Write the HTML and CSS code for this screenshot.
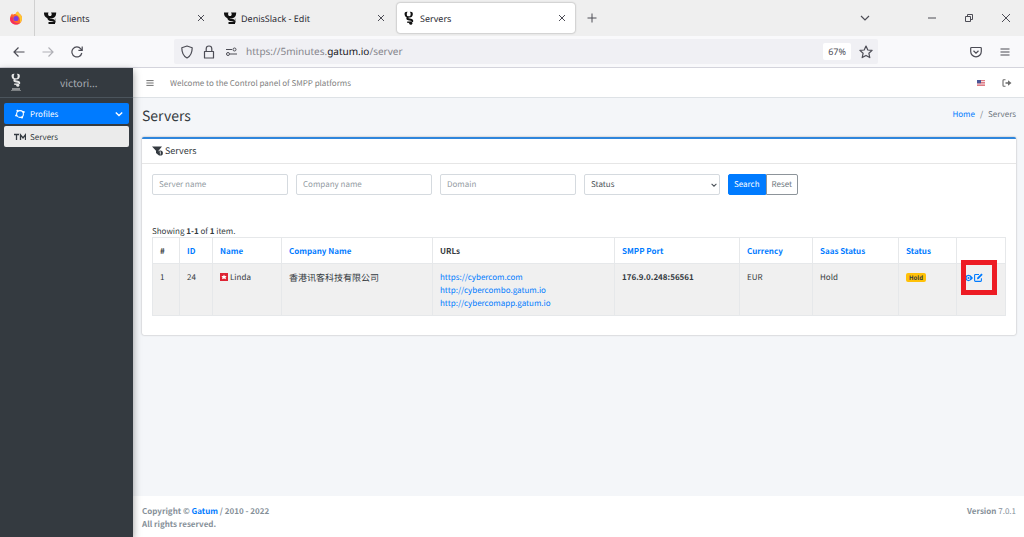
FILE: index.html
```html
<!DOCTYPE html>
<html lang="en">
<head>
<meta charset="utf-8">
<title>Servers</title>
<link rel="stylesheet" href="styles.css">
</head>
<body>
<svg class="defs" width="0" height="0" aria-hidden="true">
  <symbol id="logo" viewBox="0 0 14 14">
    <path d="M5.600.8C2.800.6 2.400 2 2.600 3.600c.2 1.900 1.400 2.900 3 2.900h2.200c1.600 0 2.800-1 3-2.900C11 2 10.600.6 7.800.8 8.900 2 9 4 8 5.200H5.400C4.500 4 4.600 2 5.600.8z" fill="currentColor"/>
    <path d="M6.200 6C5 6.900 5 7.900 6.400 8.200l2.400.5c1.600.3 1.800 1.300 1 2.100" fill="none" stroke="currentColor" stroke-width="2"/>
    <path d="M5.200 11.200h4.600" stroke="currentColor" stroke-width="1.400"/>
    <circle cx="8.800" cy="12.300" r="1.500" fill="currentColor"/>
  </symbol>
  <symbol id="logo-wide" viewBox="0 0 14 14">
    <path d="M1 1.500h4.500C4.800 2.800 5 4.600 6.200 5h1.600C9 4.300 9 3 8 1.500h5.200c0 3-1.200 5.700-4.700 6h-2C3 7.500.8 5 1 1.500z" fill="currentColor"/>
    <path d="M5.500 7c0 1.800 1.500 2 3.500 2.200 2 .2 3 .8 2.800 2" fill="none" stroke="currentColor" stroke-width="2.200"/>
    <path d="M5.500 12h6.500" stroke="currentColor" stroke-width="2"/>
    <path d="M11.800 7.500h1.200v3h-1.200z" fill="#aaa"/>
  </symbol>
  <symbol id="close" viewBox="0 0 10 10"><path d="M2 2l6 6M8 2L2 8" fill="none" stroke="currentColor" stroke-width="1"/></symbol>
  <symbol id="down" viewBox="0 0 10 10"><path d="M1 3l4 4 4-4" fill="none" stroke="currentColor" stroke-width="1.200"/></symbol>
  <symbol id="bars" viewBox="0 0 10 10"><path d="M.5 2h9M.5 5h9M.5 8h9" fill="none" stroke="currentColor" stroke-width="1.200"/></symbol>
</svg>

<header class="browser">
  <div class="tabs">
    <div class="firefox">
      <svg width="14" height="14" viewBox="0 0 14 14">
        <path d="M7 13.500a6 6 0 0 1-6-6C1 5.500 2 3.500 3.200 2.500l.6 1.200C5 3 6 3 6.500 3.200 7 2 8 .8 9 .5c.3 1.500 1.500 2 2.600 3.200 1.200 1.300 1.700 3 1.300 4.800a6 6 0 0 1-5.900 5z" fill="#ff6a2b"/>
        <path d="M9 .5c.3 1.500 1.500 2 2.600 3.200 1.200 1.300 1.700 3 1.300 4.800-.3 1.400-1 2.600-2 3.500C11.500 9 11 5 6.500 3.200 7 2 8 .8 9 .5z" fill="#ffc730"/>
        <path d="M1 7.500c0 4 3 6 6 6 1.500 0 3-.6 4-1.600-3 .8-7-.4-7-4.200L3.200 5z" fill="#f5305c"/>
        <circle cx="7" cy="7.500" r="2.600" fill="#7a3fe0"/>
      </svg>
    </div>
    <div class="tab">
      <svg class="favicon" width="14" height="14"><use href="#logo-wide"/></svg>
      <span class="tab-title">Clients</span>
      <button class="icon-button" aria-label="Close Clients"><svg width="10" height="10"><use href="#close"/></svg></button>
    </div>
    <div class="tab">
      <svg class="favicon" width="14" height="14"><use href="#logo-wide"/></svg>
      <span class="tab-title">DenisSlack - Edit</span>
      <button class="icon-button" aria-label="Close DenisSlack - Edit"><svg width="10" height="10"><use href="#close"/></svg></button>
    </div>
    <div class="tab tab-active">
      <svg class="favicon" width="14" height="14"><use href="#logo"/></svg>
      <span class="tab-title">Servers</span>
      <button class="icon-button" aria-label="Close Servers"><svg width="10" height="10"><use href="#close"/></svg></button>
    </div>
    <button class="icon-button new-tab" aria-label="New tab"><svg width="10" height="10" viewBox="0 0 10 10"><path d="M5 .5v9M.5 5h9" stroke="currentColor" fill="none"/></svg></button>
    <div class="window-controls">
      <button class="icon-button list-tabs" aria-label="List tabs"><svg width="10" height="10"><use href="#down"/></svg></button>
      <button class="icon-button" aria-label="Minimize"><svg width="10" height="10" viewBox="0 0 10 10"><path d="M1 5h8" stroke="currentColor"/></svg></button>
      <button class="icon-button" aria-label="Restore"><svg width="10" height="10" viewBox="0 0 10 10"><path d="M1.500 3.500h5v5h-5zM3.500 3.500v-2h5v5h-2" fill="none" stroke="currentColor"/></svg></button>
      <button class="icon-button" aria-label="Close window"><svg width="10" height="10" viewBox="0 0 10 10"><path d="M1 1l8 8M9 1L1 9" stroke="currentColor"/></svg></button>
    </div>
  </div>

  <div class="toolbar">
    <nav class="history">
      <button class="icon-button" aria-label="Back"><svg width="12" height="12" viewBox="0 0 12 12"><path d="M11.500 6H1M5.500 1.500L1 6l4.500 4.500" fill="none" stroke="currentColor" stroke-width="1.200"/></svg></button>
      <button class="icon-button muted" aria-label="Forward"><svg width="12" height="12" viewBox="0 0 12 12"><path d="M.5 6H11M6.500 1.500L11 6l-4.500 4.500" fill="none" stroke="currentColor" stroke-width="1.200"/></svg></button>
      <button class="icon-button" aria-label="Reload"><svg width="12" height="12" viewBox="0 0 12 12"><path d="M10.800 7A5 5 0 1 1 9.800 2.800L11 4.200M11.200.6v3.800H7.400" fill="none" stroke="currentColor" stroke-width="1.200"/></svg></button>
    </nav>
    <div class="address">
      <svg width="14" height="14" viewBox="0 0 14 14"><path d="M7 1L12.200 2.800C12.200 7.500 11 11 7 13 3 11 1.800 7.500 1.800 2.800z" fill="none" stroke="currentColor" stroke-width="1.200" stroke-linejoin="round"/></svg>
      <svg width="14" height="14" viewBox="0 0 14 14"><path d="M2.500 6.500h9v6.500h-9zM4.200 6.500V3.800a2.800 2.800 0 0 1 5.600 0v2.700" fill="none" stroke="currentColor" stroke-width="1.200" stroke-linejoin="round"/></svg>
      <svg width="14" height="14" viewBox="0 0 14 14"><path d="M2 4.500h6M6 9h7" fill="none" stroke="currentColor" stroke-width="1.200"/><circle cx="10.500" cy="4.500" r="1.500" fill="none" stroke="currentColor"/><circle cx="4" cy="9" r="1.500" fill="none" stroke="currentColor"/></svg>
      <span class="url">https://5minutes.<b>gatum.io</b>/server</span>
      <button class="zoom-level">67%</button>
      <button class="icon-button" aria-label="Bookmark"><svg width="14" height="14" viewBox="0 0 14 14"><path d="M7 1l1.800 4 4.300.4-3.200 2.900.9 4.300L7 10.400l-3.800 2.200.9-4.300L.9 5.400 5.200 5z" fill="none" stroke="currentColor" stroke-width="1.200" stroke-linejoin="round"/></svg></button>
    </div>
    <div class="tools">
      <button class="icon-button" aria-label="Pocket"><svg width="12" height="12" viewBox="0 0 12 12"><path d="M1.500 1.500h9q.8 0 .8.800V5.500a5.300 5.300 0 0 1-10.600 0V2.300q0-.8.800-.8zM3.500 4.800L6 7.200l2.500-2.400" fill="none" stroke="currentColor" stroke-width="1.200"/></svg></button>
      <button class="icon-button" aria-label="Application menu"><svg width="10" height="10"><use href="#bars"/></svg></button>
    </div>
  </div>
</header>

<div class="app">
  <aside class="sidebar">
    <div class="brand">
      <svg class="brand-logo" width="14" height="20" viewBox="0 0 14 20"><use href="#logo" x="0" y="0" width="14" height="14"/><path d="M3 16h8" stroke="currentColor" stroke-width="1"/><path d="M2 17.500h10" stroke="currentColor" stroke-width="1" opacity=".4"/></svg>
      <span class="brand-name">victori...</span>
    </div>
    <nav class="menu">
      <a class="menu-item menu-active" href="#">
        <svg width="12" height="10" viewBox="0 0 12 10"><circle cx="6" cy="5" r="3.400" fill="none" stroke="currentColor" stroke-width="1.100"/><g fill="currentColor"><circle cx="3.500" cy="1.800" r="1.100"/><circle cx="9.700" cy="3" r="1.100"/><circle cx="2.200" cy="6.500" r="1.100"/><circle cx="8" cy="8.500" r="1.100"/></g></svg>
        <span>Profiles</span>
        <svg class="caret" width="8" height="8" viewBox="0 0 10 10"><path d="M1 3l4 4 4-4" fill="none" stroke="currentColor" stroke-width="1.700"/></svg>
      </a>
      <a class="menu-item menu-sub" href="#">
        <svg width="12" height="10" viewBox="0 0 12 10"><path d="M0 2.500h5M2.500 2.500V8M6.500 8V2.800L9 6l2.500-3.200V8" fill="none" stroke="currentColor" stroke-width="1.300"/></svg>
        <span>Servers</span>
      </a>
    </nav>
  </aside>

  <div class="page">
    <div class="navbar">
      <button class="icon-button" aria-label="Toggle menu"><svg width="8" height="8"><use href="#bars"/></svg></button>
      <span class="welcome">Welcome to the Control panel of SMPP platforms</span>
      <svg class="flag" width="8" height="6" viewBox="0 0 8 6"><path fill="#f3dfe2" d="M0 0h8v6H0z"/><path d="M0 .5h8M0 2.500h8M0 4h8M0 5.500h8" stroke="#d8606c" stroke-width=".8"/><path fill="#4a5596" d="M0 0h4v3.300H0z"/></svg>
      <button class="icon-button" aria-label="Log out"><svg width="10" height="8" viewBox="0 0 10 8"><path d="M3.500.8H1.800Q1 .8 1 1.600v4.800q0 .8.800.8h1.700" fill="none" stroke="currentColor" stroke-width="1.100"/><path d="M3.500 3.200H6V1.300L9.500 4 6 6.700V4.800H3.500z" fill="currentColor"/></svg></button>
    </div>

    <main class="content">
      <div class="heading">
        <h1>Servers</h1>
        <nav class="breadcrumb"><a href="#">Home</a><span>/</span><span>Servers</span></nav>
      </div>

      <section class="card">
        <h2 class="card-title">
          <svg width="12" height="10" viewBox="0 0 12 10"><path d="M0 .5h10L6.500 4.800V9L4 7V4.800z" fill="currentColor"/><circle cx="8.300" cy="7" r="2.600" fill="currentColor"/><path d="M8.400 5.500v3M7.600 6h.8" stroke="#fff" stroke-width=".7"/></svg>
          <span>Servers</span>
        </h2>
        <div class="card-body">
          <form class="filters">
            <input type="text" placeholder="Server name" aria-label="Server name">
            <input type="text" placeholder="Company name" aria-label="Company name">
            <input type="text" placeholder="Domain" aria-label="Domain">
            <div class="select-wrap">
              <select aria-label="Status"><option>Status</option></select>
              <svg class="select-caret" width="6" height="6" viewBox="0 0 10 10"><path d="M1 3l4 4 4-4" fill="none" stroke="currentColor" stroke-width="1.700"/></svg>
            </div>
            <div class="button-group">
              <button class="search" type="button">Search</button><button class="reset" type="button">Reset</button>
            </div>
          </form>
          <p class="summary">Showing <b>1-1</b> of <b>1</b> item.</p>
          <table>
            <colgroup><col class="c-num"><col class="c-id"><col class="c-name"><col class="c-company"><col class="c-urls"><col class="c-port"><col class="c-currency"><col class="c-saas"><col class="c-status"><col class="c-actions"></colgroup>
            <thead>
              <tr>
                <th>#</th><th><a href="#">ID</a></th><th><a href="#">Name</a></th><th><a href="#">Company Name</a></th><th>URLs</th><th><a href="#">SMPP Port</a></th><th><a href="#">Currency</a></th><th><a href="#">Saas Status</a></th><th><a href="#">Status</a></th><th></th>
              </tr>
            </thead>
            <tbody>
              <tr>
                <td>1</td>
                <td>24</td>
                <td><svg class="hk" width="8" height="8" viewBox="0 0 8 8"><path fill="#de2434" d="M0 0h8v8H0z"/><path d="M4 1.500l.7 1.600 1.800-.1-1 1.500.5 1.700L4 5.500l-2 .7.500-1.700-1-1.500 1.800.1z" fill="#fff"/></svg>Linda</td>
                <td class="company">香港讯客科技有限公司</td>
                <td><a href="#">https://cybercom.com</a><br><a href="#">http://cybercombo.gatum.io</a><br><a href="#">http://cybercomapp.gatum.io</a></td>
                <td><b>176.9.0.248:56561</b></td>
                <td>EUR</td>
                <td>Hold</td>
                <td><span class="badge">Hold</span></td>
                <td class="actions">
                  <div class="action-links">
                    <a href="#" aria-label="View"><svg width="9" height="8" viewBox="0 0 9 8"><path d="M0 4Q4.500-2.500 9 4 4.500 10.500 0 4z" fill="currentColor"/><circle cx="4.500" cy="4" r="1.900" fill="#f0f0f0"/><circle cx="4.500" cy="4" r="1.100" fill="currentColor"/></svg></a>
                    <a href="#" aria-label="Edit"><svg width="9" height="9" viewBox="0 0 9 9"><path d="M5 1.500H1.400Q.6 1.500.6 2.300v5.300q0 .8.800.8h5.200q.8 0 .8-.8V5.300" fill="none" stroke="currentColor" stroke-width="1.100"/><path d="M3 6.200l.3-1.700L7.400.4l1.300 1.300-4.100 4.200z" fill="currentColor"/></svg></a>
                  </div>
                  <span class="highlight"></span>
                </td>
              </tr>
            </tbody>
          </table>
        </div>
      </section>
    </main>

    <footer class="footer">
      <p class="copyright">Copyright © <a href="#">Gatum</a> / 2010 - 2022<br>All rights reserved.</p>
      <p><b>Version</b> 7.0.1</p>
    </footer>
  </div>
</div>
</body>
</html>
```

FILE: styles.css
```css
* { box-sizing: border-box; }
body {
  margin: 0;
  min-height: 100vh;
  display: flex;
  flex-direction: column;
  font: 8px/13px "Noto Sans CJK SC", "Source Sans Pro", sans-serif;
  text-rendering: geometricPrecision;
  color: #343a40;
}
svg { display: block; flex: none; }
.defs { position: absolute; }
a { color: #007bff; text-decoration: none; }
button, input, select { font: inherit; color: inherit; margin: 0; text-rendering: inherit; }
p, h1, h2 { margin: 0; font-weight: 400; }
.icon-button {
  border: 0;
  padding: 0;
  background: none;
  display: flex;
}

.browser {
  font-family: "Noto Sans", sans-serif;
  color: #4c4c55;
  border-bottom: 1px solid #d4d4dc;
}
.tabs {
  display: flex;
  align-items: center;
  height: 36px;
  background: #efefef;
}
.firefox {
  width: 35px;
  height: 36px;
  display: flex;
  align-items: center;
  padding-left: 9px;
  border-right: 1px solid #d0d0d0;
}
.tab {
  width: 180px;
  height: 30px;
  display: flex;
  align-items: center;
  gap: 4px;
  padding: 0 9px 0 8px;
  font-size: 9px;
}
.tab-title { flex: 1; color: #2b2a33; }
.tab-active {
  margin-left: 2px;
  background: #fff;
  border-radius: 3px;
  box-shadow: 0 0 2px #888;
  width: 178px;
  padding: 0 8px 0 5px;
}
.favicon { color: #111; }
.new-tab { margin-left: 12px; }
.window-controls {
  display: flex;
  gap: 27px;
  margin-left: auto;
  padding-right: 13px;
}
.list-tabs { margin-right: 30px; }

.toolbar {
  display: flex;
  align-items: center;
  height: 31px;
  background: #f9f9fb;
}
.history { display: flex; gap: 17px; width: 174px; padding-left: 13px; }
.muted { color: #b0b0b6; }
.address {
  flex: 1;
  max-width: 704px;
  height: 25px;
  display: flex;
  align-items: center;
  gap: 8px;
  padding: 0 5px 0 6px;
  background: #f0f0f4;
  border-radius: 2px;
}
.url { flex: 1; font-size: 10px; color: #85858c; }
.url b { font-weight: 400; color: #15141a; }
.zoom-level {
  border: 0;
  border-radius: 2px;
  background: #fff;
  padding: 2px 5px;
  font-size: 9px;
}
.tools { display: flex; align-items: center; gap: 18px; margin-left: auto; padding-right: 14px; }

.app { flex: 1; display: flex; }
.sidebar {
  width: 133px;
  flex: none;
  background: #343a40;
  color: #c2c7d0;
  box-shadow: 0 3px 8px rgba(0, 0, 0, .4);
  z-index: 1;
}
.brand {
  display: flex;
  align-items: center;
  height: 30px;
  padding-left: 9px;
  border-bottom: 1px solid #4b545c;
}
.brand-name { margin-left: 37px; font-size: 10px; color: #a8adb4; }
.brand-logo { color: #e8e8e8; }
.menu { display: grid; gap: 2px; padding: 5px 4px; }
.menu-item {
  display: flex;
  align-items: center;
  gap: 4px;
  height: 21px;
  padding: 1px 6px 0 10px;
  border-radius: 2px;
  color: #fff;
}
.menu-active { background: #007bff; }
.menu-sub { background: #ebebeb; color: #343a40; }
.caret { margin-left: auto; }

.page { flex: 1; min-width: 0; display: flex; flex-direction: column; background: #f4f6f9; }
.navbar {
  display: flex;
  align-items: center;
  height: 30px;
  padding: 1px 12px 0 13px;
  background: #fff;
  border-bottom: 1px solid #dee2e6;
  color: #6b6b6b;
}
.welcome { flex: 1; margin-left: 16px; color: #808080; }
.flag { margin-right: 17px; }
.content { flex: 1; padding: 0 8px 0 9px; }
.heading {
  display: flex;
  justify-content: space-between;
  align-items: center;
  height: 39px;
  padding-bottom: 3px;
}
h1 { font-size: 14px; line-height: 20px; }
.breadcrumb { display: flex; gap: 5px; color: #6c757d; padding-bottom: 3px; }
.card {
  background: #fff;
  border-top: 2px solid #2f86dc;
  border-radius: 2px;
  box-shadow: 0 0 2px rgba(0, 0, 0, .35);
}
.card-title {
  display: flex;
  align-items: center;
  gap: 1px;
  height: 25px;
  padding: 0 0 1px 10px;
  border-bottom: 1px solid #e6e6e6;
  font-size: 9px;
}
.card-body { padding: 10px 10px 19px; }
.filters { display: flex; gap: 8px; height: 21px; }
.filters input, .select-wrap { flex: 0 1 136px; min-width: 0; }
.filters input, select {
  border: 1px solid #d5dadf;
  border-radius: 2px;
  padding: 0 6px;
  background: #fff;
}
input::placeholder { color: #939ba2; opacity: 1; }
.select-wrap { position: relative; color: #495057; }
select { appearance: none; width: 100%; height: 100%; }
.select-caret { position: absolute; right: 3px; top: 8px; }
.button-group { display: flex; }
.button-group button { border: 1px solid #007bff; padding: 0 5px; }
.button-group .search { background: #007bff; color: #fff; border-radius: 2px 0 0 2px; }
.button-group .reset { background: #fff; color: #6c757d; border-color: #8d949a; border-radius: 0 2px 2px 0; }
.summary { padding-top: 30px; margin-bottom: -1px; }
table {
  width: 100%;
  table-layout: fixed;
  border-collapse: collapse;
}
th, td {
  border: 1px solid #e6e8ea;
  padding: 7px 6px 5px 7px;
  text-align: left;
  vertical-align: top;
}
tbody tr { background: #f0f0f0; }
.c-num { width: 27px; }
.c-id { width: 33px; }
.c-name { width: 69px; }
.c-company { width: 151px; }
.c-urls { width: 182px; }
.c-port { width: 125px; }
.c-currency { width: 73px; }
.c-saas { width: 86px; }
.c-status { width: 58px; }
.c-actions { width: 49px; }
.company { font-size: 9px; }
.hk { display: inline-block; margin-right: 2px; vertical-align: -1px; }
.badge {
  display: inline-block;
  background: #ffc107;
  border-radius: 2px;
  padding: 0 3px;
  font-size: 6px;
  line-height: 9px;
  font-weight: 700;
}
.actions { position: relative; }
.action-links { display: flex; align-items: center; gap: 1px; height: 13px; }
.highlight {
  position: absolute;
  left: 4px;
  top: -4px;
  width: 36px;
  height: 35px;
  border: 5px solid #ed1c24;
}
.footer {
  display: flex;
  justify-content: space-between;
  padding: 9px 8px 6px 9px;
  background: #fff;
  color: #869099;
}
.copyright, .copyright a { font-weight: 700; }
```
